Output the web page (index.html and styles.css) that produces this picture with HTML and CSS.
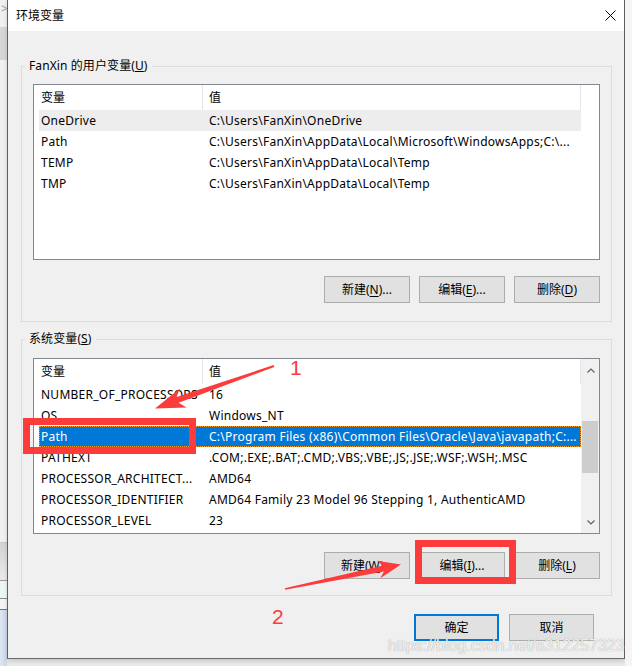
FILE: index.html
```html
<!DOCTYPE html>
<html lang="zh-CN">
<head>
<meta charset="utf-8">
<title>环境变量</title>
<link rel="stylesheet" href="styles.css">
</head>
<body>
<div class="screen">
  <div class="side-left">
    <div class="sl-a">&gt;</div>
    <div class="sl-b"></div>
    <div class="sl-c"></div>
    <div class="sl-d"></div>
    <div class="sl-e"></div>
    <div class="sl-f"></div>
    <div class="sl-g"></div>
  </div>
  <div class="dialog">
    <div class="titlebar">
      <span class="title">环境变量</span>
      <svg class="close" width="11" height="11" viewBox="0 0 11 11"><path d="M0.5 0.5 L10.5 10.5 M10.5 0.5 L0.5 10.5" stroke="#000" stroke-width="1" fill="none"/></svg>
    </div>
    <div class="dlg-body">
      <div class="group g-user">
        <div class="legend">FanXin 的用户变量(<u>U</u>)</div>
        <div class="listview">
          <div class="lv-main">
            <div class="lv-header"><div class="hc hc1">变量</div><div class="hc hc2">值</div></div>
            <div class="lv-row inactive"><span class="c1">OneDrive</span><span class="c2">C:\Users\FanXin\OneDrive</span></div>
            <div class="lv-row"><span class="c1">Path</span><span class="c2">C:\Users\FanXin\AppData\Local\Microsoft\WindowsApps;C:\...</span></div>
            <div class="lv-row"><span class="c1">TEMP</span><span class="c2">C:\Users\FanXin\AppData\Local\Temp</span></div>
            <div class="lv-row"><span class="c1">TMP</span><span class="c2">C:\Users\FanXin\AppData\Local\Temp</span></div>
          </div>
        </div>
        <div class="btn-row">
          <button class="btn">新建(<u>N</u>)...</button>
          <button class="btn">编辑(<u>E</u>)...</button>
          <button class="btn">删除(<u>D</u>)</button>
        </div>
      </div>
      <div class="group g-sys">
        <div class="legend">系统变量(<u>S</u>)</div>
        <div class="listview">
          <div class="lv-main">
            <div class="lv-header"><div class="hc hc1">变量</div><div class="hc hc2">值</div></div>
            <div class="lv-row"><span class="c1">NUMBER_OF_PROCESSORS</span><span class="c2">16</span></div>
            <div class="lv-row"><span class="c1">OS</span><span class="c2">Windows_NT</span></div>
            <div class="lv-row selected"><span class="c1">Path</span><span class="c2">C:\Program Files (x86)\Common Files\Oracle\Java\javapath;C:...</span></div>
            <div class="lv-row"><span class="c1">PATHEXT</span><span class="c2">.COM;.EXE;.BAT;.CMD;.VBS;.VBE;.JS;.JSE;.WSF;.WSH;.MSC</span></div>
            <div class="lv-row"><span class="c1">PROCESSOR_ARCHITECT...</span><span class="c2">AMD64</span></div>
            <div class="lv-row"><span class="c1">PROCESSOR_IDENTIFIER</span><span class="c2">AMD64 Family 23 Model 96 Stepping 1, AuthenticAMD</span></div>
            <div class="lv-row"><span class="c1">PROCESSOR_LEVEL</span><span class="c2">23</span></div>
          </div>
          <div class="scrollbar">
            <div class="sb-btn"><svg width="8" height="5" viewBox="0 0 8 5"><path d="M0.5 4.5 L4 1 L7.5 4.5" stroke="#606060" stroke-width="1.2" fill="none"/></svg></div>
            <div class="sb-track"><div class="sb-thumb"></div></div>
            <div class="sb-btn"><svg width="8" height="5" viewBox="0 0 8 5"><path d="M0.5 0.5 L4 4 L7.5 0.5" stroke="#606060" stroke-width="1.2" fill="none"/></svg></div>
          </div>
        </div>
        <div class="btn-row">
          <button class="btn">新建(<u>W</u>)...</button>
          <button class="btn">编辑(<u>I</u>)...</button>
          <button class="btn">删除(<u>L</u>)</button>
        </div>
      </div>
      <div class="footer">
        <button class="btn btn-default">确定</button>
        <button class="btn">取消</button>
      </div>
    </div>
  </div>
  <div class="side-right"></div>
</div>

<div class="annot box-path"></div>
<div class="annot box-edit"></div>
<span class="annot num num1">1</span>
<span class="annot num num2">2</span>
<svg class="annot arrows" width="632" height="666" viewBox="0 0 632 666">
  <polygon fill="#fc3b3b" points="155,408.5 186.6,407.4 178.6,402.8 274.3,366.9 273.7,365.1 176.6,397.1 179.9,388.5"/>
  <polygon fill="#fc3b3b" points="401,564.5 380.3,578.3 384,571.4 285.2,589.8 284.8,588.2 382.8,565.6 376.7,560.7"/>
</svg>
<div class="annot watermark">https://blog.csdn.net/a312257323</div>
</body>
</html>
```

FILE: styles.css
```css
* { box-sizing: border-box; }

html, body {
  margin: 0;
  padding: 0;
}

body {
  width: 632px;
  height: 666px;
  overflow: hidden;
  background: #e9e9e9;
  font-family: "Noto Sans", "Noto Sans CJK SC", sans-serif;
  font-size: 12px;
  color: #000;
  position: relative;
}

.screen {
  display: flex;
  align-items: flex-start;
  height: 666px;
}

/* left strip: other windows behind the dialog */
.side-left {
  width: 7px;
  height: 666px;
  display: flex;
  flex-direction: column;
  background: #f0f0f0;
  flex: none;
}
.sl-a { height: 27px; color: #9a9a9a; font-size: 12px; line-height: 18px; text-indent: 1px; overflow: hidden; }
.sl-b { height: 33px; background: #d6d6d6; }
.sl-c { height: 483px; background: #f0f0f0; border-bottom: 1px solid #c9c9c9; }
.sl-d { height: 38px; background: linear-gradient(#d2d2d2, #eaeaea); border-bottom: 1px solid #9a9a9a; }
.sl-e { height: 18px; background: #eef5f5; border-bottom: 1px solid #8a8a8a; }
.sl-f { height: 11px; background: #f4f4f4; border-bottom: 1px solid #777; }
.sl-g { flex: 1; background: linear-gradient(90deg, #dfe6f0, #c9d7ea); }

.side-right {
  width: 7px;
  height: 666px;
  background: #f5f5f5;
  flex: none;
}

.dialog {
  width: 618px;
  flex: none;
  background: #f0f0f0;
  border-left: 1px solid #5f5f5f;
  border-right: 1px solid #5f5f5f;
  border-bottom: 1px solid #6a6a6a;
  box-shadow: 0 2px 4px rgba(0,0,0,0.15);
}

.titlebar {
  height: 31px;
  background: #fff;
  display: flex;
  align-items: center;
  justify-content: space-between;
  padding-left: 8px;
  padding-right: 8px;
}
.title { font-size: 12px; line-height: 31px; }
.close { display: block; margin-top: 0; }

.dlg-body {
  padding: 35px 12px 17px 13px;
  display: flex;
  flex-direction: column;
}

.group {
  border: 1px solid #dcdcdc;
  display: flex;
  flex-direction: column;
  padding: 0 11px;
}
.g-user { padding-bottom: 18px; }
.g-sys { margin-top: 17px; padding-bottom: 16px; }

.legend {
  align-self: flex-start;
  margin-top: -9px;
  margin-left: -8px;
  padding: 0 4px;
  height: 16px;
  line-height: 16px;
  background: #f0f0f0;
  white-space: nowrap;
  letter-spacing: 0.1px;
}

.listview {
  height: 176px;
  border: 1px solid #828790;
  background: #fff;
  display: flex;
  margin-top: 10px;
  overflow: hidden;
}
.g-sys .listview { margin-top: 11px; }

.lv-main {
  flex: 1;
  min-width: 0;
  display: flex;
  flex-direction: column;
}

.lv-header {
  height: 25px;
  display: flex;
  flex: none;
}
.hc {
  line-height: 25px;
  border-right: 1px solid #e5e5e5;
  white-space: nowrap;
}
.hc1 { width: 169px; padding-left: 7px; }
.hc2 { width: 378px; padding-left: 6px; }

.lv-row {
  height: 21px;
  margin-left: 5px;
  width: 542px;
  display: flex;
  flex: none;
  line-height: 21px;
  white-space: nowrap;
  letter-spacing: 0.25px;
}
.lv-row .c1 { width: 163px; padding-left: 2px; overflow: hidden; flex: none; }
.lv-row .c2 { width: 379px; padding-left: 7px; overflow: hidden; flex: none; }
.lv-row.inactive { background: #ededed; }
.lv-row.selected {
  background: #0078d7;
  color: #fff;
  outline: 1px dotted #f59a2a;
  outline-offset: -1px;
}

.scrollbar {
  width: 18px;
  flex: none;
  background: #f0f0f0;
  display: flex;
  flex-direction: column;
}
.sb-btn {
  height: 22px;
  display: flex;
  align-items: center;
  justify-content: center;
  padding-left: 1px;
}
.sb-btn svg { display: block; }
.sb-track { flex: 1; padding: 40px 1px 0 1px; }
.sb-thumb { height: 52px; background: #cdcdcd; }

.btn-row {
  display: flex;
  justify-content: flex-end;
  gap: 9px;
  margin-top: 16px;
}
.g-sys .btn-row { margin-top: 18px; }

.btn {
  width: 86px;
  height: 27px;
  margin: 0;
  padding: 0;
  background: #e1e1e1;
  border: 1px solid #adadad;
  font-family: "Noto Sans", "Noto Sans CJK SC", sans-serif;
  font-size: 12px;
  color: #000;
  line-height: 25px;
  text-align: center;
  white-space: nowrap;
}
.btn u { text-underline-offset: 2px; }

.footer {
  display: flex;
  justify-content: flex-end;
  gap: 10px;
  margin-top: 18px;
  margin-right: 18px;
}
.footer .btn { width: 85px; }
.btn-default { border: 2px solid #0078d7; line-height: 23px; }

/* annotations drawn over the screenshot */
.annot { position: absolute; pointer-events: none; }

.box-path {
  left: 23px;
  top: 418px;
  width: 173px;
  height: 36px;
  border: 7px solid #fc3b3b;
}
.box-edit {
  left: 415px;
  top: 540px;
  width: 101px;
  height: 44px;
  border: 7px solid #fc3b3b;
}

.num {
  font-family: "Liberation Sans", Arial, sans-serif;
  font-size: 21px;
  line-height: 21px;
  color: #fc3b3b;
}
.num1 { left: 290px; top: 357px; }
.num2 { left: 272px; top: 606px; }

.arrows { left: 0; top: 0; }

.watermark {
  left: 388px;
  top: 636px;
  font-family: "Liberation Sans", Arial, sans-serif;
  font-size: 16px;
  line-height: 20px;
  color: rgba(250, 250, 250, 0.9);
  text-shadow: 0 0 1px rgba(120, 120, 120, 0.8);
  white-space: nowrap;
}
```
